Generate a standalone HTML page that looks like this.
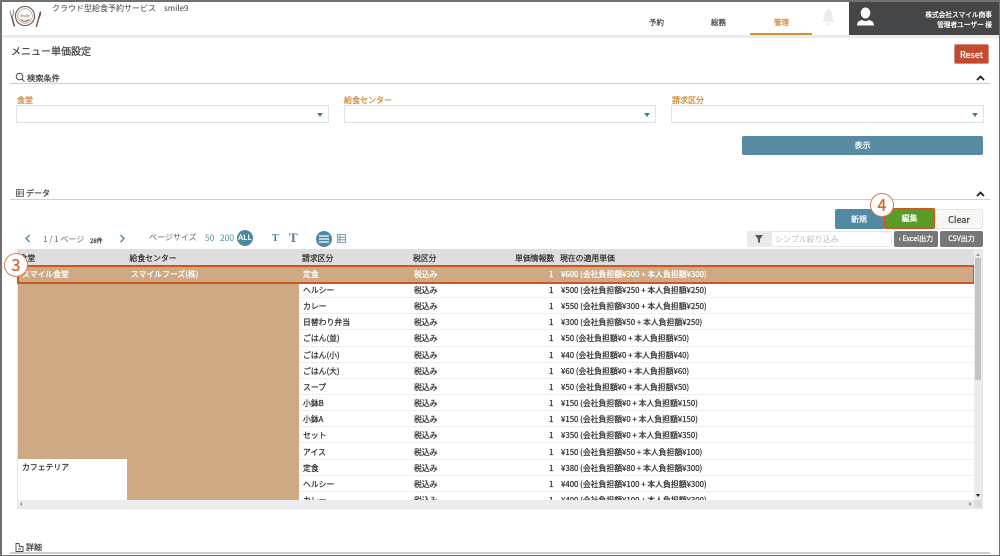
<!DOCTYPE html>
<html lang="ja"><head><meta charset="utf-8"><title>メニュー単価設定</title>
<style>
*{box-sizing:border-box}
html,body{margin:0;padding:0;background:#fff}
body{width:1000px;height:556px;position:relative;overflow:hidden;font-family:"Noto Sans CJK JP","Liberation Sans",sans-serif;color:#333;font-size:8px;filter:blur(.25px)}
.a{position:absolute;white-space:nowrap}
.t{position:absolute;white-space:nowrap;line-height:12px;transform:translateY(1px)}
.b{-webkit-text-stroke:.25px currentColor}
.lab{color:#d08a35;-webkit-text-stroke:.25px currentColor;font-size:8px}
.sel{position:absolute;height:18px;top:105px;border:1px solid #dfe2e4;background:#fff}
.sel i{position:absolute;right:5px;top:7px;width:0;height:0;border-left:3px solid transparent;border-right:3px solid transparent;border-top:4px solid #3f7f9c}
.rule{position:absolute;left:10px;right:10px;height:1px;background:#cfcfcf}
.btn{position:absolute;display:flex;align-items:center;justify-content:center;border-radius:2px;-webkit-text-stroke:.25px currentColor;color:#fff}
.r{position:absolute;left:299px;width:675px;height:16.15px;background:#fff;border-bottom:1px solid #eeeff1}
.r span{position:absolute;top:3px;line-height:12px;white-space:nowrap;font-size:7.85px;color:#333;-webkit-text-stroke:.25px currentColor}
.r .c1{left:4px}.r .c2{left:115px}.r .c3{left:250px;width:4px;text-align:right}.r .c4{left:262px}
.h{font-size:7.85px}
</style></head><body>
<!-- frame -->
<div class="a" style="left:0;top:0;width:1000px;height:1.5px;background:#6f6f6f;z-index:9"></div>
<div class="a" style="left:0;top:0;width:1.5px;height:556px;background:#6f6f6f;z-index:9"></div>
<div class="a" style="right:0;top:0;width:1.5px;height:556px;background:#6f6f6f;z-index:9"></div>
<div class="a" style="left:0;bottom:0;width:1000px;height:1.5px;background:#6f6f6f;z-index:9"></div>

<!-- header -->
<div class="a" style="left:0;top:35px;width:1000px;height:3px;background:#ececec"></div>
<svg class="a" style="left:6px;top:6px" width="36" height="24" viewBox="0 0 36 24" fill="none" stroke="#6e5546">
<circle cx="19" cy="10" r="9.500" stroke-width="1.100"/><circle cx="19" cy="10" r="7.300" stroke-width=".5"/>
<path d="M14.500 13.500q4.500 3.500 9 0" stroke-width="1"/>
<path d="M5.500 9.500L8.500 20.500" stroke-width="1.500"/>
<path d="M4 4.500l.8 4.500q1.200 1 2.700-.5L7.500 3.500" stroke="#a98a75" stroke-width="1.100"/>
<path d="M34.500 5.500L30.300 21" stroke-width="1.400"/>
<path d="M34.500 5.500q.5 4-2.500 8" stroke-width="1.100"/>
<text x="19" y="11" font-size="4.200" fill="#6e5546" stroke="none" text-anchor="middle" font-family="Liberation Serif,serif">Smile</text>
</svg>
<div class="t" style="left:52px;top:2px;color:#444;font-size:8px">クラウド型給食予約サービス　smile9</div>
<div class="t b" style="left:649px;top:16px;font-size:7.500px;color:#444">予約</div>
<div class="t b" style="left:711px;top:16px;font-size:7.500px;color:#444">総務</div>
<div class="t b" style="left:774px;top:16px;font-size:7.500px;color:#d08a35">管理</div>
<div class="a" style="left:750px;top:33px;width:62px;height:2px;background:#d58f35"></div>
<svg class="a" style="left:821px;top:8px" width="15" height="18" viewBox="0 0 15 18"><path d="M7.500 1c-1 0-1.500.7-1.500 1.500C4 3.500 3.500 5.500 3.500 8c0 3-1 4.500-2.500 6h13c-1.500-1.500-2.500-3-2.500-6 0-2.500-.5-4.500-2.500-5.500C9 1.700 8.500 1 7.500 1zM5.500 15a2 2 0 0 0 4 0z" fill="#ececec"/></svg>
<div class="a" style="left:849px;top:1px;width:151px;height:34px;background:#444648"></div>
<svg class="a" style="left:856px;top:7px" width="19" height="20" viewBox="0 0 19 20"><ellipse cx="9.500" cy="6" rx="4.800" ry="5.500" fill="#fff"/><path d="M1 18.500c0-3.500 2-5 5.500-5.500 2 1.500 4 1.500 6 0 3.500.5 5.500 2 5.500 5.500z" fill="#fff"/></svg>
<div class="t b" style="right:8px;top:7px;color:#fff;font-size:6.700px">株式会社スマイル商事</div>
<div class="t b" style="right:8px;top:17px;color:#fff;font-size:6.700px">管理者ユーザー 様</div>

<!-- title -->
<div class="t b" style="left:11px;top:43px;font-size:10px;line-height:14px;color:#444">メニュー単価設定</div>
<div class="btn" style="left:954px;top:44px;width:35px;height:20px;background:#c4492f;font-size:9px;border:1px solid #d09080">Reset</div>

<!-- search -->
<svg class="a" style="left:15px;top:72px" width="10" height="10" viewBox="0 0 10 10" fill="none" stroke="#444"><circle cx="4.500" cy="4.500" r="3.300"/><path d="M7 7l2.500 2.500"/></svg>
<div class="t b" style="left:27px;top:71px;color:#444;font-size:8.200px">検索条件</div>
<div class="rule" style="top:83px"></div>
<svg class="a" style="left:976px;top:75px" width="9" height="6" viewBox="0 0 9 6" fill="none" stroke="#222" stroke-width="1.800"><path d="M1 5l3.500-3.500L8 5"/></svg>
<div class="t lab" style="left:17px;top:94px">食堂</div>
<div class="t lab" style="left:344px;top:94px">給食センター</div>
<div class="t lab" style="left:672px;top:94px">請求区分</div>
<div class="sel" style="left:16px;width:313px"><i></i></div>
<div class="sel" style="left:344px;width:312px"><i></i></div>
<div class="sel" style="left:671px;width:313px"><i></i></div>
<div class="btn" style="left:742px;top:136px;width:241px;height:19px;background:#578ba1;font-size:8px">表示</div>

<!-- data -->
<svg class="a" style="left:16px;top:189px" width="8" height="8" viewBox="0 0 8 8" fill="none" stroke="#555" stroke-width=".8"><rect x=".5" y=".5" width="7" height="7"/><path d="M.5 3h7M.5 5h7M3 .5v7"/></svg>
<div class="t b" style="left:26px;top:187px;color:#444;font-size:8px">データ</div>
<div class="rule" style="top:199px"></div>
<svg class="a" style="left:976px;top:191px" width="9" height="6" viewBox="0 0 9 6" fill="none" stroke="#222" stroke-width="1.800"><path d="M1 5l3.500-3.500L8 5"/></svg>

<div class="btn" style="left:835px;top:209px;width:50px;height:20px;background:#528aa3;font-size:8px;padding-right:2px">新規</div>
<div class="btn" style="left:884px;top:208px;width:51px;height:21px;background:#5a9a26;border:1.500px solid #d2511e;font-size:8px">編集</div>
<div class="btn" style="left:935px;top:209px;width:48px;height:20px;background:#f7f7f4;border:1px solid #e4e4e4;color:#444;font-size:9px">Clear</div>
<div class="a" style="left:870px;top:193px;width:24px;height:24px;border-radius:50%;background:#fff;border:1.200px solid #d97b4e;color:#d2622e;font-size:16px;-webkit-text-stroke:.3px currentColor;line-height:21px;text-align:center">4</div>

<div class="a" style="left:747px;top:231px;width:24px;height:16px;background:#e8ebee"></div>
<svg class="a" style="left:754px;top:234px" width="10" height="10" viewBox="0 0 10 10"><path d="M1 1h8L6 5v4L4 8V5z" fill="#555"/></svg>
<div class="a" style="left:771px;top:231px;width:121px;height:16px;border:1px solid #e6e6e6;background:#fff"></div>
<div class="t" style="left:775px;top:233px;color:#bbb;font-size:8px">シンプル絞り込み</div>
<div class="btn" style="left:894px;top:231px;width:44px;height:16px;background:#777;font-size:7px">‹ Excel出力</div>
<div class="btn" style="left:940px;top:231px;width:43px;height:16px;background:#777;font-size:7px">CSV出力</div>

<!-- pager -->
<svg class="a" style="left:24px;top:234px" width="8" height="9" viewBox="0 0 8 9" fill="none" stroke="#5a8ea6" stroke-width="1.500"><path d="M5.500 1L2 4.500 5.500 8"/></svg>
<div class="t" style="left:43px;top:233px;color:#666;font-size:8px">1 / 1 ページ</div>
<div class="t b" style="left:90px;top:234px;font-size:6px;color:#333">28件</div>
<svg class="a" style="left:118px;top:234px" width="8" height="9" viewBox="0 0 8 9" fill="none" stroke="#5a8ea6" stroke-width="1.500"><path d="M2.500 1L6 4.500 2.500 8"/></svg>
<div class="t" style="left:149px;top:231px;color:#666;font-size:8px">ページサイズ</div>
<div class="t" style="left:205px;top:231px;color:#5a8ea6;font-size:8.500px">50</div>
<div class="t" style="left:220px;top:231px;color:#5a8ea6;font-size:8.500px">200</div>
<div class="a" style="left:237px;top:230px;width:16px;height:16px;border-radius:50%;background:#4d88a5;color:#fff;font-size:7.500px;font-weight:700;text-align:center;line-height:16px">ALL</div>
<div class="t" style="left:272px;top:232px;color:#4d7f99;font-family:'Liberation Serif',serif;font-weight:700;font-size:10px">T</div>
<div class="t" style="left:289px;top:231px;color:#4d7f99;font-family:'Liberation Serif',serif;font-weight:700;font-size:13px">T</div>
<div class="a" style="left:316px;top:231px;width:16px;height:16px;border-radius:50%;background:#4d88a5"></div>
<svg class="a" style="left:316px;top:231px" width="16" height="16" viewBox="0 0 16 16" stroke="#fff" stroke-width="1.200"><path d="M3 5h10M3 8h10M3 11h10"/></svg>
<svg class="a" style="left:337px;top:234px" width="9" height="9" viewBox="0 0 9 9" fill="none" stroke="#5a8ea6" stroke-width=".8"><rect x=".5" y=".5" width="8" height="8"/><path d="M.5 3.200h8M.5 5.800h8M3 .5v8"/></svg>

<!-- table -->
<div class="a" style="left:17px;top:249px;width:966px;height:260px;background:#fff;border:1px solid #e6e6e6;overflow:hidden"></div>
<div class="a" style="left:17px;top:249px;width:957px;height:17px;background:#dedede"></div>
<div class="t b h" style="left:19.500px;top:252px;color:#333">食堂</div>
<div class="t b h" style="left:129.500px;top:252px;color:#333">給食センター</div>
<div class="t b h" style="left:302px;top:252px;color:#333">請求区分</div>
<div class="t b h" style="left:413px;top:252px;color:#333">税区分</div>
<div class="t b h" style="left:515px;top:252px;color:#333">単価情報数</div>
<div class="t b h" style="left:560px;top:252px;color:#333">現在の適用単価</div>

<div class="a" style="left:18px;top:283px;width:281px;height:217px;background:#cfa983"></div>
<div class="a" style="left:18px;top:459px;width:109px;height:41px;background:#fff"></div>
<div class="t b h" style="left:22px;top:461px;color:#333">カフェテリア</div>

<div class="r" style="top:282px"><span class="c1">ヘルシー</span><span class="c2">税込み</span><span class="c3">1</span><span class="c4">¥500 (会社負担額¥250 + 本人負担額¥250)</span></div>
<div class="r" style="top:298.150px"><span class="c1">カレー</span><span class="c2">税込み</span><span class="c3">1</span><span class="c4">¥550 (会社負担額¥300 + 本人負担額¥250)</span></div>
<div class="r" style="top:314.300px"><span class="c1">日替わり弁当</span><span class="c2">税込み</span><span class="c3">1</span><span class="c4">¥300 (会社負担額¥50 + 本人負担額¥250)</span></div>
<div class="r" style="top:330.450px"><span class="c1">ごはん(並)</span><span class="c2">税込み</span><span class="c3">1</span><span class="c4">¥50 (会社負担額¥0 + 本人負担額¥50)</span></div>
<div class="r" style="top:346.600px"><span class="c1">ごはん(小)</span><span class="c2">税込み</span><span class="c3">1</span><span class="c4">¥40 (会社負担額¥0 + 本人負担額¥40)</span></div>
<div class="r" style="top:362.750px"><span class="c1">ごはん(大)</span><span class="c2">税込み</span><span class="c3">1</span><span class="c4">¥60 (会社負担額¥0 + 本人負担額¥60)</span></div>
<div class="r" style="top:378.900px"><span class="c1">スープ</span><span class="c2">税込み</span><span class="c3">1</span><span class="c4">¥50 (会社負担額¥0 + 本人負担額¥50)</span></div>
<div class="r" style="top:395.050px"><span class="c1">小鉢B</span><span class="c2">税込み</span><span class="c3">1</span><span class="c4">¥150 (会社負担額¥0 + 本人負担額¥150)</span></div>
<div class="r" style="top:411.200px"><span class="c1">小鉢A</span><span class="c2">税込み</span><span class="c3">1</span><span class="c4">¥150 (会社負担額¥0 + 本人負担額¥150)</span></div>
<div class="r" style="top:427.350px"><span class="c1">セット</span><span class="c2">税込み</span><span class="c3">1</span><span class="c4">¥350 (会社負担額¥0 + 本人負担額¥350)</span></div>
<div class="r" style="top:443.500px"><span class="c1">アイス</span><span class="c2">税込み</span><span class="c3">1</span><span class="c4">¥150 (会社負担額¥50 + 本人負担額¥100)</span></div>
<div class="r" style="top:459.650px"><span class="c1">定食</span><span class="c2">税込み</span><span class="c3">1</span><span class="c4">¥380 (会社負担額¥80 + 本人負担額¥300)</span></div>
<div class="r" style="top:475.800px"><span class="c1">ヘルシー</span><span class="c2">税込み</span><span class="c3">1</span><span class="c4">¥400 (会社負担額¥100 + 本人負担額¥300)</span></div>
<div class="r" style="top:491.950px;height:8.050px;overflow:hidden;border:0"><span class="c1">カレー</span><span class="c2">税込み</span><span class="c3">1</span><span class="c4">¥400 (会社負担額¥100 + 本人負担額¥300)</span></div>

<!-- selected row -->
<div class="a" style="left:17px;top:265px;width:958px;height:19px;background:#cfa983;border:2px solid #cf5420"></div>
<div class="t b h" style="left:22px;top:268px;color:#fff">スマイル食堂</div>
<div class="t b h" style="left:131px;top:268px;color:#fff">スマイルフーズ(株)</div>
<div class="t b h" style="left:303px;top:268px;color:#fff">定食</div>
<div class="t b h" style="left:414px;top:268px;color:#fff">税込み</div>
<div class="t b h" style="left:549px;top:268px;color:#fff">1</div>
<div class="t b h" style="left:561px;top:268px;color:#fff">¥600 (会社負担額¥300 + 本人負担額¥300)</div>
<div class="a" style="left:4px;top:253px;width:24px;height:24px;border-radius:50%;background:#fff;border:1.200px solid #d97b4e;color:#d2622e;font-size:16px;-webkit-text-stroke:.3px currentColor;line-height:21px;text-align:center">3</div>

<!-- scrollbars -->
<div class="a" style="left:974px;top:250px;width:8px;height:250px;background:#ececec"></div>
<div class="a" style="left:975px;top:258px;width:6px;height:122px;background:#c4c4c4"></div>
<div class="a" style="left:976px;top:253px;width:0;height:0;border-left:2px solid transparent;border-right:2px solid transparent;border-bottom:3px solid #999"></div>
<div class="a" style="left:976px;top:494px;width:0;height:0;border-left:2.500px solid transparent;border-right:2.500px solid transparent;border-top:3px solid #222"></div>
<div class="a" style="left:18px;top:500px;width:964px;height:8px;background:#ececec"></div>
<div class="a" style="left:20px;top:502px;width:0;height:0;border-top:2px solid transparent;border-bottom:2px solid transparent;border-right:2px solid #888"></div>
<div class="a" style="left:969px;top:502px;width:0;height:0;border-top:2px solid transparent;border-bottom:2px solid transparent;border-left:3px solid #999"></div>
<div class="a" style="left:974px;top:500px;width:8px;height:8px;background:#ddd"></div>

<!-- detail -->
<svg class="a" style="left:15px;top:543px" width="9" height="9" viewBox="0 0 9 9" fill="none" stroke="#444" stroke-width=".9"><path d="M1 .5h3l.5 3h3.500v5h-7zM3 6h3"/></svg>
<div class="t b" style="left:26px;top:541px;color:#444;font-size:8px">詳細</div>
<div class="rule" style="top:552px;height:2px;background:#cfcfcf"></div>
</body></html>
